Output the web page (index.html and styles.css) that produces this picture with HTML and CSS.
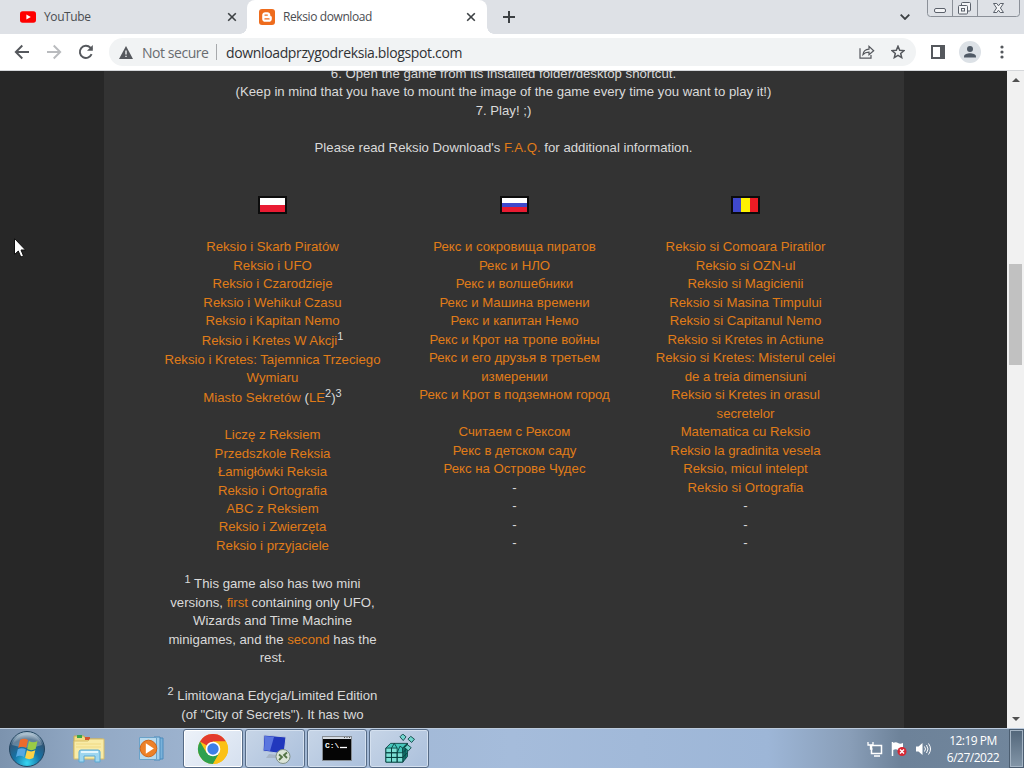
FILE: index.html
```html
<!DOCTYPE html>
<html lang="en">
<head>
  <meta charset="UTF-8">
  <meta name="viewport" content="width=device-width, initial-scale=1.0">
  <title>Reksio download</title>
  <link rel="stylesheet" href="styles.css">
</head>
<body>
  <div class="tab-strip">
    <div class="tab">
      <svg class="favicon" viewBox="0 0 16 16"><rect y="2.3" width="16" height="11.4" rx="2.6" fill="#f00"/><path d="M6.4 5.5v5L10.8 8z" fill="#fff"/></svg>
      <span class="tab-title">YouTube</span>
      <svg class="tab-close" viewBox="0 0 10 10"><path d="M1.2 1.2l7.6 7.6M8.8 1.2L1.2 8.8"/></svg>
    </div>
    <div class="tab tab-active">
      <svg class="favicon" viewBox="0 0 16 16"><rect width="16" height="16" rx="3" fill="#ee6c1d"/><path d="M6.2 3.2h2.3c1.6 0 2.8 1.2 2.8 2.8v.6c0 .5.3.7.8.7s.7.3.7.7v1.9c0 1.7-1.2 2.9-2.9 2.9H6.2c-1.7 0-3-1.2-3-2.9V6.1c0-1.7 1.3-2.9 3-2.9z" fill="#fff"/><path d="M6 6.1h2.3M6 9.9h4" stroke="#ee6c1d" stroke-width="1.4" stroke-linecap="round"/></svg>
      <span class="tab-title">Reksio download</span>
      <svg class="tab-close" viewBox="0 0 10 10"><path d="M1.2 1.2l7.6 7.6M8.8 1.2L1.2 8.8"/></svg>
    </div>
    <svg class="new-tab" viewBox="0 0 12 12"><path d="M6 0v12M0 6h12"/></svg>
    <svg class="tab-search" viewBox="0 0 10 6"><path d="M.7.7L5 5 9.3.7"/></svg>
    <div class="window-buttons">
      <svg viewBox="0 0 93 17">
        <path d="M.5 0v13.5q0 3 3 3h86q3 0 3-3V0M25.5 0v16M50.5 0v16" fill="none" stroke="#8b9098"/>
        <g fill="#f3f4f6" stroke="#5b616b">
          <rect x="7.5" y="8.5" width="11" height="4" rx="1.5"/>
          <rect x="34.5" y="2.5" width="9" height="8.5" rx="1"/>
          <rect x="31.5" y="5.5" width="9" height="8.5" rx="1"/>
          <rect x="34.5" y="8.5" width="3" height="2.5"/>
          <path d="M66.5 3.5h3.3l1.7 2.3 1.7-2.3h3.3L73.4 8l3.1 4.5h-3.3l-1.7-2.3-1.7 2.3h-3.3L69.600 8z"/>
        </g>
      </svg>
    </div>
  </div>

  <div class="toolbar">
    <svg class="nav-icon" viewBox="0 0 16 16"><path d="M15 8H2M8.3 1.5L1.800 8l6.5 6.5"/></svg>
    <svg class="nav-icon nav-disabled" viewBox="0 0 16 16"><path d="M1 8h13M7.7 1.5L14.2 8l-6.5 6.5"/></svg>
    <svg class="nav-icon" viewBox="0 0 16 16"><path d="M13.6 10.2A6.1 6.1 0 1 1 12.4 3.7l1.5 1.5"/><path d="M14.8 1v5.8H9z" fill="#55585d" stroke="none"/></svg>
    <div class="address-bar">
      <svg class="warning" viewBox="0 0 14 13"><path d="M7 0l7 13H0z" fill="#55585d"/><path d="M6.3 4.5h1.4v4H6.3zM6.3 9.7h1.4v1.4H6.3z" fill="#f1f3f4"/></svg>
      <span class="not-secure">Not secure</span>
      <span class="divider"></span>
      <span class="url">downloadprzygodreksia.blogspot.com</span>
      <svg class="share" viewBox="0 0 16 14"><path d="M1 3.2v9.9h11V10"/><path d="M4 9.5c.4-3.4 2.500-5.200 6-5.400V1.400L14.700 5.700 10 9.800V7.200C7.300 7.200 5.500 7.800 4 9.500z"/></svg>
      <svg class="star" viewBox="0 0 14 14"><path d="M7 1.200l1.700 4 4.300.4-3.300 2.800 1 4.200L7 10.400l-3.700 2.200 1-4.200L1 5.600l4.300-.4z"/></svg>
    </div>
    <svg class="side-panel" viewBox="0 0 14 14"><path d="M1 1h12v12H1z" fill="none" stroke="#55585d" stroke-width="2"/><path d="M9 1h4v12H9z" fill="#55585d"/></svg>
    <div class="avatar">
      <svg viewBox="0 0 14 14"><circle cx="7" cy="4" r="3" fill="#505a66"/><path d="M1 12.500v-1C1 9.300 4.500 8.300 7 8.300s6 1 6 3.200v1z" fill="#505a66"/></svg>
    </div>
    <svg class="menu-dots" viewBox="0 0 4 14"><circle cx="2" cy="2" r="1.6"/><circle cx="2" cy="7" r="1.6"/><circle cx="2" cy="12" r="1.6"/></svg>
  </div>

  <div class="viewport">
    <div class="page">
      <div class="post">
        <div class="intro">
          6. Open the game from its installed folder/desktop shortcut.<br>
          (Keep in mind that you have to mount the image of the game every time you want to play it!)<br>
          7. Play! ;)<br>
          <br>
          Please read Reksio Download's <a href="#">F.A.Q.</a> for additional information.
        </div>
        <div class="languages">
          <div class="language">
            <div class="flag flag-pl"></div>
            <a href="#">Reksio i Skarb Piratów</a><br>
            <a href="#">Reksio i UFO</a><br>
            <a href="#">Reksio i Czarodzieje</a><br>
            <a href="#">Reksio i Wehikuł Czasu</a><br>
            <a href="#">Reksio i Kapitan Nemo</a><br>
            <a href="#">Reksio i Kretes W Akcji</a><sup>1</sup><br>
            <a href="#">Reksio i Kretes: Tajemnica Trzeciego<br>Wymiaru</a><br>
            <a href="#">Miasto Sekretów</a> (<a href="#">LE</a><sup>2</sup>)<sup>3</sup><br>
            <br>
            <a href="#">Liczę z Reksiem</a><br>
            <a href="#">Przedszkole Reksia</a><br>
            <a href="#">Łamigłówki Reksia</a><br>
            <a href="#">Reksio i Ortografia</a><br>
            <a href="#">ABC z Reksiem</a><br>
            <a href="#">Reksio i Zwierzęta</a><br>
            <a href="#">Reksio i przyjaciele</a><br>
            <br>
            <sup>1</sup> This game also has two mini<br>
            versions, <a href="#">first</a> containing only UFO,<br>
            Wizards and Time Machine<br>
            minigames, and the <a href="#">second</a> has the<br>
            rest.<br>
            <br>
            <sup>2</sup> Limitowana Edycja/Limited Edition<br>
            (of "City of Secrets"). It has two<br>
            languages: Polish and English.
          </div>
          <div class="language language-ru">
            <div class="flag flag-ru"></div>
            <a href="#">Рекс и сокровища пиратов</a><br>
            <a href="#">Рекс и НЛО</a><br>
            <a href="#">Рекс и волшебники</a><br>
            <a href="#">Рекс и Машина времени</a><br>
            <a href="#">Рекс и капитан Немо</a><br>
            <a href="#">Рекс и Крот на тропе войны</a><br>
            <a href="#">Рекс и его друзья в третьем<br>измерении</a><br>
            <a href="#">Рекс и Крот в подземном город</a><br>
            <br>
            <a href="#">Считаем с Рексом</a><br>
            <a href="#">Рекс в детском саду</a><br>
            <a href="#">Рекс на Острове Чудес</a><br>
            -<br>
            -<br>
            -<br>
            -
          </div>
          <div class="language language-ro">
            <div class="flag flag-ro"></div>
            <a href="#">Reksio si Comoara Piratilor</a><br>
            <a href="#">Reksio si OZN-ul</a><br>
            <a href="#">Reksio si Magicienii</a><br>
            <a href="#">Reksio si Masina Timpului</a><br>
            <a href="#">Reksio si Capitanul Nemo</a><br>
            <a href="#">Reksio si Kretes in Actiune</a><br>
            <a href="#">Reksio si Kretes: Misterul celei<br>de a treia dimensiuni</a><br>
            <a href="#">Reksio si Kretes in orasul<br>secretelor</a><br>
            <a href="#">Matematica cu Reksio</a><br>
            <a href="#">Reksio la gradinita vesela</a><br>
            <a href="#">Reksio, micul intelept</a><br>
            <a href="#">Reksio si Ortografia</a><br>
            -<br>
            -<br>
            -
          </div>
        </div>
      </div>
    </div>
    <div class="scrollbar">
      <svg class="scroll-arrow" viewBox="0 0 8 4"><path d="M0 4l4-4 4 4z"/></svg>
      <div class="scroll-thumb"></div>
      <svg class="scroll-arrow" viewBox="0 0 8 4"><path d="M0 0l4 4 4-4z"/></svg>
    </div>
  </div>

  <div class="taskbar">
    <div class="start">
      <svg viewBox="0 0 38 38">
        <defs>
          <radialGradient id="orb" cx=".5" cy=".9" r=".85"><stop offset="0" stop-color="#35d6f2"/><stop offset=".45" stop-color="#1572a5"/><stop offset=".8" stop-color="#315778"/><stop offset="1" stop-color="#a5bccd"/></radialGradient>
        </defs>
        <circle cx="19" cy="19" r="17.5" fill="url(#orb)" stroke="#234560"/>
        <path d="M4 15a15.500 15.500 0 0 1 30 0q-14 5-30 0z" fill="#fff" opacity=".25"/>
        <path d="M12 10q4-2.500 8 0l-1.800 8q-4-2.300-8 0z" fill="#ec6b2c"/>
        <path d="M21 11q4 2.500 8.500 0l-1.900 8q-4.200 2.300-8.400 0z" fill="#9acb46"/>
        <path d="M9.800 19.300q4-2.300 8 0l-1.800 7.700q-4-2.300-8 0z" fill="#55a8e2"/>
        <path d="M18.900 20.300q4.200 2.300 8.400 0l-1.900 7.700q-4.200 2.300-8.300 0z" fill="#fcd246"/>
      </svg>
    </div>
    <div class="task">
      <svg viewBox="0 0 34 30">
        <path d="M2 2h10l2 3h16v18H2z" fill="#f1dc86" stroke="#c9ab54"/>
        <path d="M5 1h5v3H5z" fill="#3aa54a"/><path d="M13 3h5v3h-5z" fill="#d4552f"/><path d="M21 5h6v3h-6z" fill="#4b8edb"/>
        <path d="M2 7h14l2-2h14v20H2z" fill="#f8eba7" stroke="#d6bd68"/>
        <path d="M4 10h25M4 13h25" stroke="#efd982"/>
        <path d="M7 28V18q0-2 2-2h17q2 0 2 2v10h-5v-6H12v6z" fill="#9ed6f0" stroke="#5aa9d3"/>
        <path d="M9 18h17" stroke="#e3f6fd" stroke-width="2"/>
      </svg>
    </div>
    <div class="task">
      <svg viewBox="0 0 34 30">
        <path d="M24 4h5v21h-5z" fill="#7ab2da" stroke="#4b8bbd"/><path d="M20 3h6v23h-6z" fill="#a5d0ec" stroke="#4b8bbd"/><path d="M5.500 3.500h17v22h-17z" fill="#b8daee" stroke="#6aa2c9"/>
        <circle cx="14.500" cy="14.500" r="8.300" fill="#ed8128" stroke="#cf6518"/>
        <path d="M11.800 9.300v10.400l8-5.200z" fill="#fff"/>
      </svg>
    </div>
    <div class="task task-open task-current">
      <svg viewBox="0 0 34 30">
        <circle cx="17" cy="15" r="15" fill="#fbc116"/>
        <path d="M17 15L4 7.500A15 15 0 0 1 30 7.500H17z" fill="#e33b2e"/>
        <path d="M4 7.500a15 15 0 0 0 13 22.500l6.500-11.200L17 15l-6.500 3.800z" fill="#2da04e"/>
        <path d="M17 7.500h13A15 15 0 0 1 17 30l6.500-11.200z" fill="#fbc116"/>
        <circle cx="17" cy="15" r="7.300" fill="#fff"/><circle cx="17" cy="15" r="5.700" fill="#3d7fe8"/>
      </svg>
    </div>
    <div class="task task-open">
      <svg viewBox="0 0 34 30">
        <path d="M6 1l22 2-2 17-21-3z" fill="#2138bd" stroke="#b9c8dd"/>
        <path d="M7 2l9 1-4 14-6-1z" fill="#7592ee" opacity=".7"/>
        <path d="M11 20l8 1 1 3H8z" fill="#a6b5c7"/>
        <circle cx="25" cy="22.500" r="7" fill="#dce5d8" stroke="#7e8f85"/>
        <path d="M21 20.500l3 2.500-3 3M29 18.500L26 21l3 3" fill="none" stroke="#547344" stroke-width="1.800"/>
      </svg>
    </div>
    <div class="task task-open">
      <svg viewBox="0 0 34 30">
        <path d="M2.500 2.500h29v24h-29z" fill="#050505" stroke="#858b91"/><path d="M3 3h28v2H3z" fill="#d6dce3"/>
        <path d="M24 3.500h1m1.500 0h1m1.500 0h1" stroke="#555"/>
        <text x="5" y="14" class="prompt">C:\</text>
        <path d="M20 13.500h7" stroke="#fff" stroke-width="1.300"/>
      </svg>
    </div>
    <div class="task task-open">
      <svg viewBox="0 0 34 32">
        <g stroke="#063c3c" stroke-width=".9" stroke-linejoin="round">
          <path d="M3 15l5-5h18l-5 5v15H3z" fill="#46c5bb"/>
          <path d="M21 15l5-5v14l-5 6z" fill="#168179"/>
          <path d="M3 15h6v5H3zM9 15h6v5H9zM3 20h6v5H3zM9 20h6v5H9zM15 20h6v5h-6zM3 25h6v5H3zM9 25h6v5H9zM15 25h6v5h-6z" fill="#7ce0d5"/>
          <path d="M9 15l3-5 3 5M15 20l3-7 3 2M23.500 12.500v14M21 20l5-5M21 25l5-5" fill="none"/>
          <path d="M21 0l3.500 3-3 4-3.500-4zM29.500 2.500l4 3-3 3.500-4-3.500zM26 11.500l4 3-3 3.500-4-3.500z" fill="#70d5cd"/>
        </g>
      </svg>
    </div>
    <div class="tray">
      <svg viewBox="0 0 16 16"><path d="M4.500 4.500h10v8h-10zM7 15h6" fill="#73879d" stroke="#fff" stroke-width="1.500"/><path d="M1 1v3h5V1M3.500 4v4h2" fill="none" stroke="#fff" stroke-width="1.300"/></svg>
      <svg viewBox="0 0 16 16"><path d="M1.500 1v14" stroke="#fff" stroke-width="1.500"/><path d="M2 2q3-1.500 5 0t5 0v7q-3 1.500-5 0T2 9z" fill="#fff"/><circle cx="11" cy="10.500" r="4.500" fill="#d72632"/><path d="M9 8.500l4 4m0-4l-4 4" stroke="#fff" stroke-width="1.400"/></svg>
      <svg viewBox="0 0 16 16"><path d="M1 5.500h2.500L7.500 2v12l-4-3.500H1z" fill="#fff"/><path d="M9.500 5.500q2 2.500 0 5M11.500 4q3 4 0 8M13.500 2.500q4 5.500 0 11" fill="none" stroke="#fff"/></svg>
    </div>
    <div class="clock">
      <span>12:19 PM</span>
      <span>6/27/2022</span>
    </div>
    <div class="show-desktop"></div>
  </div>

  <svg class="cursor" viewBox="0 0 12 20"><path d="M.5.5v16l3.800-3.500 2.500 6 2.700-1.100L7 12h4.500z" fill="#fff" stroke="#111"/></svg>
</body>
</html>
```
FILE: styles.css
```css
:root {
  --chrome-strip: #dee1e6;
  --chrome-icon: #55585d;
  --page-bg: #272727;
  --post-bg: #333333;
  --link: #e07c18;
  --text: #dadada;
}

* {
  box-sizing: border-box;
}

body {
  margin: 0;
  width: 1024px;
  height: 768px;
  overflow: hidden;
  display: flex;
  flex-direction: column;
  font-family: 'Open Sans', 'Noto Sans', sans-serif;
}

svg {
  display: block;
  flex: none;
}

/* Tabs */
.tab-strip {
  display: flex;
  align-items: center;
  height: 34px;
  background: var(--chrome-strip);
}

.tab {
  display: flex;
  align-items: center;
  width: 247px;
  height: 34px;
  padding: 0 10px 0 20px;
  font-size: 12px;
  letter-spacing: -0.4px;
  color: #4a4d51;
}

.tab-active {
  position: relative;
  width: 240px;
  padding: 0 11px 0 12px;
  background: #fff;
  border-radius: 8px 8px 0 0;
}

/* Curved feet of the active tab */
.tab-active::before,
.tab-active::after {
  content: '';
  position: absolute;
  bottom: 0;
  width: 7px;
  height: 7px;
}

.tab-active::before {
  left: -7px;
  background: radial-gradient(circle at 0 0, transparent 6.5px, #fff 7px);
}

.tab-active::after {
  right: -7px;
  background: radial-gradient(circle at 100% 0, transparent 6.5px, #fff 7px);
}

.favicon {
  width: 16px;
  height: 16px;
  margin-right: 8px;
}

.tab-title {
  flex: 1;
  padding-bottom: 1px;
  white-space: nowrap;
}

.tab-close {
  width: 10px;
  height: 10px;
  fill: none;
  stroke: #3c4043;
  stroke-width: 1.6;
}

.new-tab {
  width: 12px;
  height: 12px;
  margin-left: 16px;
  stroke: #3c4043;
  stroke-width: 2;
}

.tab-search {
  width: 10px;
  height: 6px;
  margin-left: auto;
  margin-right: 17px;
  fill: none;
  stroke: #3c4043;
  stroke-width: 1.8;
}

.window-buttons {
  align-self: flex-start;
  width: 93px;
  margin-right: 4px;
}

/* Toolbar */
.toolbar {
  display: flex;
  align-items: center;
  height: 37px;
  padding: 0 20px 0 14px;
  background: #fff;
  border-bottom: 1px solid #d5d7da;
}

.nav-icon {
  width: 16px;
  height: 16px;
  margin-right: 16px;
  fill: none;
  stroke: var(--chrome-icon);
  stroke-width: 1.9;
}

.nav-disabled {
  stroke: #b9bbbe;
}

.address-bar {
  display: flex;
  align-items: center;
  width: 807px;
  height: 28px;
  margin-left: -1px;
  padding: 0 11px 0 10px;
  border-radius: 14px;
  background: #f1f3f4;
  font-size: 14px;
}

.warning {
  width: 14px;
  height: 13px;
}

.not-secure {
  width: 67px;
  margin-left: 9px;
  color: #696c70;
  letter-spacing: -0.45px;
  white-space: nowrap;
}

.divider {
  width: 1px;
  height: 16px;
  margin: 0 9px 0 7px;
  background: #a7a9ac;
}

.url {
  flex: 1;
  color: #303235;
  letter-spacing: -0.36px;
}

.share {
  width: 16px;
  height: 14px;
  margin-right: 16px;
  fill: none;
  stroke: var(--chrome-icon);
  stroke-width: 1.2;
}

.star {
  width: 14px;
  height: 14px;
  fill: none;
  stroke: var(--chrome-icon);
  stroke-width: 1.5;
}

.side-panel {
  width: 14px;
  height: 14px;
  margin-left: 15px;
}

.avatar {
  width: 22px;
  height: 22px;
  margin-left: 14px;
  padding: 4px;
  border-radius: 50%;
  background: #dce1e6;
}

.menu-dots {
  width: 4px;
  height: 14px;
  margin-left: auto;
  fill: var(--chrome-icon);
}

/* Page */
.viewport {
  display: flex;
  height: 657px;
  overflow: hidden;
}

.page {
  flex: 1;
  padding-left: 104px;
  overflow: hidden;
  background: var(--page-bg);
}

.post {
  width: 800px;
  height: 657px;
  overflow: hidden;
  background: var(--post-bg);
  color: var(--text);
  font-family: 'Liberation Sans', Arial, sans-serif;
  font-size: 13.2px;
  line-height: 1.4;
  text-align: center;
}

.post a {
  color: var(--link);
  text-decoration: none;
}

.post sup {
  line-height: 1.04;
}

.intro {
  width: 799px;
  margin-top: -6px;
}

.languages {
  display: flex;
  align-items: flex-start;
  margin-top: 39px;
  padding-left: 52px;
}

.language {
  width: 233px;
  white-space: nowrap;
}

.language-ru {
  width: 251px;
}

.language-ro {
  width: 211px;
}

.flag {
  width: 29px;
  height: 18px;
  margin: 0 auto 24px;
  border: 2px solid #0c0c0c;
}

.flag-pl {
  background: linear-gradient(#fff 50%, #e91b32 50%);
}

.flag-ru {
  background: linear-gradient(#fff 33%, #3f48cc 33% 67%, #e91b32 67%);
}

.flag-ro {
  background: linear-gradient(90deg, #3f48cc 33%, #fff200 33% 67%, #ed1c24 67%);
}

.scrollbar {
  display: flex;
  flex-direction: column;
  align-items: center;
  width: 17px;
  padding: 7px 0;
  background: #f1f1f1;
}

.scroll-arrow {
  width: 8px;
  height: 4px;
  fill: #505050;
}

.scroll-thumb {
  width: 13px;
  height: 101px;
  margin: 182px 0 auto;
  background: #c1c1c1;
}

/* Taskbar */
.taskbar {
  display: flex;
  align-items: center;
  height: 40px;
  border-top: 1px solid #bccbdd;
  background: linear-gradient(90deg, #7c93ae 0, #91a8c4 8%, #9eb4d0 20%, #a5bcdb 50%, #9db6d7 75%, #899eb8 83%, #6d8299 88%, #71869c 100%);
}

.start {
  width: 38px;
  height: 38px;
  margin: 0 13px 0 8px;
}

.task {
  display: flex;
  align-items: center;
  justify-content: center;
  width: 60px;
  height: 39px;
  margin-right: 2px;
}

.task svg {
  width: 34px;
  height: 30px;
}

.task-open {
  border: 1px solid #566b86;
  border-radius: 3px;
  box-shadow: inset 0 0 0 1px #d4e0ef;
  background: linear-gradient(135deg, #c7d5e7, #abc0dc);
}

.task-current {
  background: linear-gradient(135deg, #edf2f9, #d5e0ef);
  box-shadow: inset 0 0 0 1px #fff;
}

.prompt {
  font-family: 'Liberation Mono', monospace;
  font-size: 8px;
  font-weight: bold;
  fill: #fff;
}

.tray {
  display: flex;
  gap: 8px;
  margin-left: auto;
}

.tray svg {
  width: 16px;
  height: 16px;
}

.clock {
  display: flex;
  flex-direction: column;
  align-items: center;
  width: 60px;
  margin: 0 6px 0 12px;
  color: #fff;
  font-size: 12px;
  line-height: 17px;
  letter-spacing: -0.5px;
  white-space: nowrap;
}

.show-desktop {
  width: 15px;
  height: 39px;
  border: 1px solid #4b5d70;
  box-shadow: inset 0 0 0 1px #a4b4c4;
  background: linear-gradient(#52667a, #8396a8);
}

/* Mouse pointer */
.cursor {
  position: absolute;
  left: 14px;
  top: 238px;
  width: 12px;
  height: 20px;
}
```
